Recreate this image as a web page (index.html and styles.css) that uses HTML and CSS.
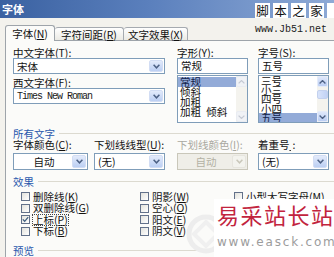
FILE: index.html
```html
<!DOCTYPE html>
<html lang="zh-CN">
<head>
<meta charset="utf-8">
<title>字体</title>
<link rel="stylesheet" href="styles.css">
</head>
<body>
<div class="dlg">
  <div class="titlebar"><span class="title">字体</span></div>
  <div class="tabs">
    <div class="tab active">字体(<u>N</u>)</div>
    <div class="tab t2">字符间距(<u>R</u>)</div>
    <div class="tab t3">文字效果(<u>X</u>)</div>
  </div>
  <div class="panel">
    <div class="fontgrid">
      <div class="col">
        <div class="lbl">中文字体(<u>T</u>):</div>
        <div class="combo w152"><span class="val">宋体</span><span class="btn"><svg width="7" height="5" viewBox="0 0 7 5"><path d="M0.6 0.8L3.5 3.8L6.4 0.8" fill="none" stroke="#4d6185" stroke-width="1.5"/></svg></span></div>
        <div class="lbl second">西文字体(<u>F</u>):</div>
        <div class="combo w152"><span class="val mono">Times New Roman</span><span class="btn"><svg width="7" height="5" viewBox="0 0 7 5"><path d="M0.6 0.8L3.5 3.8L6.4 0.8" fill="none" stroke="#4d6185" stroke-width="1.5"/></svg></span></div>
      </div>
      <div class="col">
        <div class="lbl">字形(<u>Y</u>):</div>
        <div class="field">常规</div>
        <div class="list">
          <div class="items">
            <div class="item sel">常规</div>
            <div class="item">倾斜</div>
            <div class="item">加粗</div>
            <div class="item">加粗&ensp;倾斜</div>
          </div>
          <div class="vscroll off">
            <span class="sbtn"><svg width="7" height="4" viewBox="0 0 7 4"><path d="M0.6 3.4L3.5 0.6L6.4 3.4" fill="none" stroke="#c5cad4" stroke-width="1.3"/></svg></span>
            <span class="track"></span>
            <span class="sbtn"><svg width="7" height="4" viewBox="0 0 7 4"><path d="M0.6 0.6L3.5 3.4L6.4 0.6" fill="none" stroke="#c5cad4" stroke-width="1.3"/></svg></span>
          </div>
        </div>
      </div>
      <div class="col">
        <div class="lbl">字号(<u>S</u>):</div>
        <div class="field">五号</div>
        <div class="list">
          <div class="items tight">
            <div class="item">三号</div>
            <div class="item">小三</div>
            <div class="item">四号</div>
            <div class="item">小四</div>
            <div class="item sel">五号</div>
          </div>
          <div class="vscroll">
            <span class="sbtn"><svg width="7" height="4" viewBox="0 0 7 4"><path d="M0.6 3.4L3.5 0.6L6.4 3.4" fill="none" stroke="#4d6185" stroke-width="1.4"/></svg></span>
            <span class="track"><span class="thumb"></span></span>
            <span class="sbtn"><svg width="7" height="4" viewBox="0 0 7 4"><path d="M0.6 0.6L3.5 3.4L6.4 0.6" fill="none" stroke="#4d6185" stroke-width="1.4"/></svg></span>
          </div>
        </div>
      </div>
    </div>

    <div class="group g1">所有文字</div>
    <div class="attrgrid">
      <div class="lbl">字体颜色(<u>C</u>):</div>
      <div class="lbl">下划线线型(<u>U</u>):</div>
      <div class="lbl dim">下划线颜色(<u>I</u>):</div>
      <div class="lbl">着重号<u class="blank">&#8202;&#8202;</u>:</div>
      <div class="combo w75"><span class="val center">自动</span><span class="btn"><svg width="7" height="5" viewBox="0 0 7 5"><path d="M0.6 0.8L3.5 3.8L6.4 0.8" fill="none" stroke="#4d6185" stroke-width="1.5"/></svg></span></div>
      <div class="combo w71"><span class="val">(无)</span><span class="btn"><svg width="7" height="5" viewBox="0 0 7 5"><path d="M0.6 0.8L3.5 3.8L6.4 0.8" fill="none" stroke="#4d6185" stroke-width="1.5"/></svg></span></div>
      <div class="combo w71 disabled"><span class="val center">自动</span><span class="btn"><svg width="7" height="5" viewBox="0 0 7 5"><path d="M0.6 0.8L3.5 3.8L6.4 0.8" fill="none" stroke="#c9c7ba" stroke-width="1.5"/></svg></span></div>
      <div class="combo w71"><span class="val">(无)</span><span class="btn"><svg width="7" height="5" viewBox="0 0 7 5"><path d="M0.6 0.8L3.5 3.8L6.4 0.8" fill="none" stroke="#4d6185" stroke-width="1.5"/></svg></span></div>
    </div>

    <div class="group g2">效果</div>
    <div class="effects">
      <div class="chk"><span class="cb"></span><span>删除线(<u>K</u>)</span></div>
      <div class="chk"><span class="cb"></span><span>阴影(<u>W</u>)</span></div>
      <div class="chk"><span class="cb"></span><span>小型大写字母(<u>M</u>)</span></div>
      <div class="chk"><span class="cb"></span><span>双删除线(<u>G</u>)</span></div>
      <div class="chk"><span class="cb"></span><span>空心(<u>O</u>)</span></div>
      <div></div>
      <div class="chk"><span class="cb on"><svg width="7" height="7" viewBox="0 0 7 7"><path d="M0.8 3.4L2.7 5.3L6.2 1.2" fill="none" stroke="#3f5f80" stroke-width="1.3"/></svg></span><span class="focus">上标(<u>P</u>)</span></div>
      <div class="chk"><span class="cb"></span><span>阳文(<u>E</u>)</span></div>
      <div></div>
      <div class="chk"><span class="cb"></span><span>下标(<u>B</u>)</span></div>
      <div class="chk"><span class="cb"></span><span>阴文(<u>V</u>)</span></div>
      <div></div>
    </div>

    <div class="group g3">预览</div>
  </div>
</div>

<div class="jb51"><span>脚</span><span>本</span><span>之</span><span>家</span><span>&nbsp;</span></div>
<div class="jb51url">www.Jb51.net</div>

<svg class="logo" width="42" height="42" viewBox="0 0 42 42"><circle cx="21" cy="21" r="17" fill="none" stroke="#ededed" stroke-width="5"/><path d="M21 9L33 21L21 33L9 21Z" fill="none" stroke="#f0f0f0" stroke-width="4"/></svg>
<div class="easck">
  <div class="cn">易采站长站</div>
  <div class="url">www.easck.com</div>
</div>
</body>
</html>
```

FILE: styles.css
```css
html, body {
  margin: 0;
  padding: 0;
}
body {
  position: relative;
  width: 334px;
  height: 257px;
  overflow: hidden;
  background: #f3f2ed;
  font-family: "Noto Sans CJK SC", "Noto Sans", sans-serif;
  font-size: 10.5px;
  color: #111;
}
u {
  text-decoration: underline;
  text-underline-offset: 1px;
}

.titlebar {
  height: 18px;
  background: linear-gradient(90deg, #3a61a1 0%, #5b80bd 45%, #8eaad6 100%);
  display: flex;
  align-items: center;
}
.title {
  color: #fff;
  font-weight: bold;
  font-size: 11px;
  line-height: 18px;
  padding-left: 2px;
}

.tabs {
  display: flex;
  align-items: flex-end;
  margin-top: 7px;
  padding-left: 5px;
  height: 15px;
  position: relative;
  z-index: 2;
}
.tab {
  box-sizing: border-box;
  height: 13px;
  border: 1px solid #a5aab0;
  border-bottom: none;
  border-radius: 3px 3px 0 0;
  background: linear-gradient(#ffffff, #ebeae4);
  text-align: center;
  line-height: 13px;
  font-size: 10.5px;
  white-space: nowrap;
}
.tab.active {
  width: 50px;
  height: 16px;
  margin-bottom: -1px;
  background: #fbfbf9;
  line-height: 15px;
  border-color: #9ea4aa;
}
.tab.t2 {
  width: 69px;
  border-left: none;
}
.tab.t3 {
  width: 64px;
  border-left: none;
}

.panel {
  box-sizing: border-box;
  margin-left: 5px;
  width: 340px;
  height: 217px;
  border: 1px solid #9ea4aa;
  border-bottom: none;
  background: #fbfbf9;
  padding: 6px 0 0 7px;
}

.fontgrid {
  display: grid;
  grid-template-columns: 164px 81px 71px;
}
.col {
  display: flex;
  flex-direction: column;
}
.lbl {
  line-height: 11px;
  height: 11px;
  white-space: nowrap;
}
.lbl.second {
  margin-top: 3px;
}
.lbl.dim {
  color: #a9a8a0;
}
u.blank {
  display: inline-block;
  width: 3px;
}

.combo {
  box-sizing: border-box;
  height: 16px;
  border: 1px solid #7f9db9;
  background: #fff;
  display: flex;
  align-items: center;
}
.combo.w152 { width: 152px; }
.combo.w75 { width: 75px; height: 17px; }
.combo.w71 { width: 71px; height: 17px; }
.combo .val {
  flex: 1;
  padding-left: 3px;
  line-height: 13px;
  white-space: nowrap;
  overflow: hidden;
}
.combo .val.center {
  text-align: center;
}
.combo .val.mono {
  font-family: "Liberation Mono", monospace;
  font-size: 10px;
  letter-spacing: -1px;
  color: #1a1a1a;
}
.combo .btn {
  box-sizing: border-box;
  width: 14px;
  align-self: stretch;
  margin: 1px;
  border-radius: 2px;
  background: linear-gradient(#e3ebfb, #bccff3);
  border: 1px solid #d2ddf4;
  display: flex;
  align-items: center;
  justify-content: center;
}
.combo.disabled {
  background: #efeee8;
  border-color: #c9c7ba;
  color: #b3b1a4;
}
.combo.disabled .btn {
  background: #f3f3ee;
  border-color: #e6e5de;
}

.field {
  box-sizing: border-box;
  width: 71px;
  height: 16px;
  border: 1px solid #7f9db9;
  background: #fff;
  padding-left: 3px;
  line-height: 14px;
}
.list {
  box-sizing: border-box;
  width: 71px;
  height: 48px;
  margin-top: 1px;
  border: 1px solid #7f9db9;
  background: #fff;
  display: flex;
}
.items {
  flex: 1;
  padding-top: 1px;
  overflow: hidden;
}
.item {
  line-height: 10px;
  height: 10px;
  padding-left: 2px;
  white-space: nowrap;
}
.items.tight {
  padding-top: 0;
}
.items.tight .item {
  line-height: 9.2px;
  height: 9.2px;
}
.item.sel {
  background: #93abd8;
  color: #13224a;
}

.vscroll {
  width: 11px;
  display: flex;
  flex-direction: column;
  background: #f4f3ee;
}
.sbtn {
  box-sizing: border-box;
  height: 11px;
  border-radius: 2px;
  border: 1px solid #e4ebf9;
  background: linear-gradient(#dfe8fb, #bacdf3);
  display: flex;
  align-items: center;
  justify-content: center;
}
.vscroll.off .sbtn {
  background: #f0f2f6;
  border-color: #e9ecf2;
}
.track {
  flex: 1;
  padding-top: 3px;
}
.thumb {
  display: block;
  box-sizing: border-box;
  height: 9px;
  border-radius: 2px;
  border: 1px solid #c3d1ee;
  background: linear-gradient(90deg, #d8e3fa, #c1d2f5);
}

.group {
  display: flex;
  align-items: center;
  gap: 4px;
  color: #2a58ad;
  line-height: 11px;
  height: 11px;
  white-space: nowrap;
}
.group::after {
  content: "";
  flex: 1;
  height: 1px;
  background: #dcdad0;
}
.group.g1 { margin-top: 5px; }
.group.g2 { margin-top: 6px; }
.group.g3 { margin-top: 8px; }

.attrgrid {
  display: grid;
  grid-template-columns: 81px 83px 81px 71px;
  grid-template-rows: 11px 17px;
  row-gap: 3px;
}

.effects {
  display: grid;
  grid-template-columns: 119px 94px 100px;
  grid-auto-rows: 11.5px;
  margin-top: 4px;
  padding-left: 8px;
}
.chk {
  display: flex;
  align-items: center;
  gap: 3px;
  white-space: nowrap;
  line-height: 10px;
}
.cb {
  box-sizing: border-box;
  width: 9px;
  height: 9px;
  border: 1px solid #62718a;
  background: linear-gradient(135deg, #e2e2dc, #ffffff);
  display: flex;
  align-items: center;
  justify-content: center;
  flex: none;
}
.focus {
  outline: 1px dotted #444;
  outline-offset: 0;
}

.jb51 {
  position: absolute;
  top: 3px;
  left: 255px;
  display: flex;
  gap: 3px;
}
.jb51 span {
  width: 15px;
  height: 15px;
  background: #fff;
  color: #111;
  font-size: 12.5px;
  line-height: 15px;
  text-align: center;
}
.jb51url {
  position: absolute;
  top: 24px;
  left: 255px;
  font-family: "Liberation Mono", monospace;
  font-size: 10px;
  line-height: 12px;
  color: #222;
}

.logo {
  position: absolute;
  left: 185px;
  top: 213px;
}
.easck {
  position: absolute;
  left: 214px;
  top: 199px;
  width: 120px;
  height: 58px;
  background: #fff;
}
.easck .cn {
  margin-top: 2px;
  padding-left: 3px;
  font-size: 22px;
  line-height: 26px;
  letter-spacing: 1.5px;
  color: #c2243e;
  white-space: nowrap;
}
.easck .url {
  margin-top: 9px;
  padding-left: 3px;
  font-family: "DejaVu Sans", sans-serif;
  font-size: 12px;
  line-height: 13px;
  letter-spacing: 1.8px;
  color: #9c9c9c;
  white-space: nowrap;
}
```
